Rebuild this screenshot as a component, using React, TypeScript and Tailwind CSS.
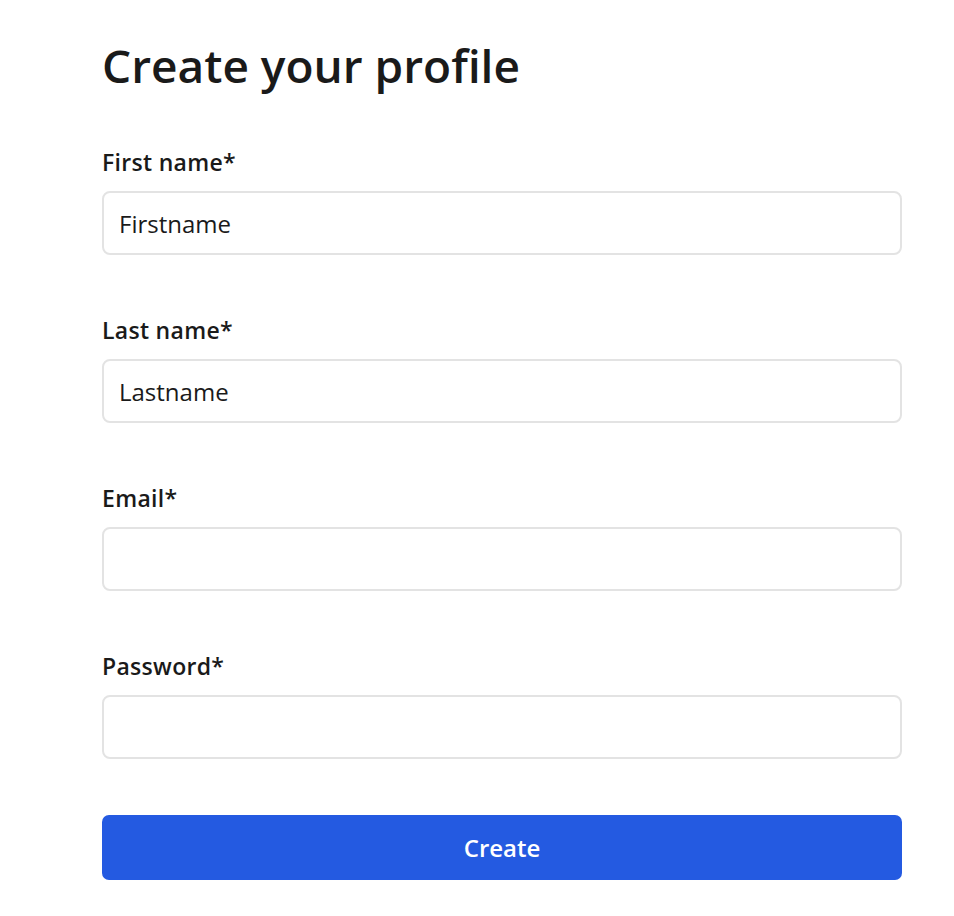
import type { ReactElement } from "react";

type FieldProps = {
	label: string;
	value?: string;
	type?: string;
};

const Field = ({ label, value, type = "text" }: FieldProps): ReactElement => {
	return (
		<label className="flex flex-col">
			<span className="h-[40px] text-[23px] font-semibold leading-[40px] tracking-[0.3px] text-[#1a1a1a]">
				{label}
			</span>
			<input
				type={type}
				defaultValue={value}
				className="mt-[9px] h-[64px] w-full rounded-[8px] border-2 border-[#e3e3e3] bg-white px-[15px] text-[24px] text-[#1a1a1a] outline-none"
			/>
		</label>
	);
};

const App = (): ReactElement => {
	return (
		<div
			className="min-h-[916px] bg-white pl-[102px]"
			style={{ fontFamily: '"Open Sans", "Noto Sans", sans-serif' }}
		>
			<div className="flex w-[800px] flex-col pt-[30px]">
				<h1 className="h-[70px] text-[46px] font-semibold leading-[70px] text-[#1a1a1a]">
					Create your profile
				</h1>
				<div className="mt-[42px] flex flex-col gap-[55px]">
					<Field label="First name*" value="Firstname" />
					<Field label="Last name*" value="Lastname" />
					<Field label="Email*" type="email" />
					<Field label="Password*" type="password" />
				</div>
				<button
					type="button"
					className="mt-[56px] h-[65px] w-full rounded-[7px] bg-[#245ae1] text-[24px] font-semibold text-white"
				>
					Create
				</button>
			</div>
		</div>
	);
};

export default App;
